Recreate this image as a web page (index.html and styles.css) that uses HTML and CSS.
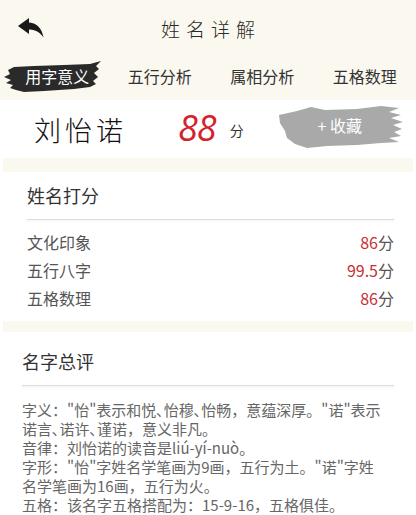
FILE: index.html
```html
<!DOCTYPE html>
<html lang="zh-CN">
<head>
    <meta charset="UTF-8">
    <meta name="viewport" content="width=device-width, initial-scale=1.0">
    <title>姓名详解</title>
    <link rel="stylesheet" href="styles.css">
</head>
<body>
    <!-- 顶部 -->
    <div class="header">
        <div class="topbar">
            <svg class="back" width="26" height="20" viewBox="0 0 26 20">
                <path d="M0 8 L11 0 L11 16 Z" fill="#1a1a1a"/>
                <path d="M9 4.5 C18 4 24 10 25.5 19.5 C21 13 16 11.5 9 11.5 Z" fill="#1a1a1a"/>
            </svg>
            <div class="title">姓名详解</div>
        </div>
        <div class="tabs">
            <div class="tab active">
                <svg class="brush" width="98" height="32" viewBox="0 0 98 32" preserveAspectRatio="none">
                    <path d="M4 9 L10 6 L30 5 L60 4 L86 3 L97 0 L92 5 L95 8 L90 12 L94 16 L89 20 L92 23 L86 26 L70 28 L40 30 L20 31 L12 29 L6 27 L9 24 L2 22 L7 19 L0 16 L6 13 Z" fill="#2a2a2a"/>
                </svg>
                <span>用字意义</span>
            </div>
            <div class="tab">五行分析</div>
            <div class="tab">属相分析</div>
            <div class="tab">五格数理</div>
        </div>
    </div>

    <!-- 名字和总分 -->
    <div class="name-row">
        <div class="name">刘怡诺</div>
        <div class="score">88</div>
        <div class="unit">分</div>
        <div class="fav">
            <svg class="brush" width="126" height="43" viewBox="0 0 126 43" preserveAspectRatio="none">
                <path d="M2 10 L20 6 L34 2 L48 5 L80 4 L104 1 L122 3 L112 7 L124 10 L114 13 L126 17 L116 20 L125 24 L117 27 L124 31 L112 33 L122 37 L104 38 L80 40 L50 41 L30 43 L18 39 L10 33 L8 26 L3 18 Z" fill="#a9a9a9"/>
            </svg>
            <span>+ 收藏</span>
        </div>
    </div>

    <div class="gap"></div>

    <!-- 姓名打分 -->
    <div class="card">
        <div class="card-title">姓名打分</div>
        <div class="line"></div>
        <div class="row"><span>文化印象</span><span class="val"><b>86</b>分</span></div>
        <div class="row"><span>五行八字</span><span class="val"><b>99.5</b>分</span></div>
        <div class="row"><span>五格数理</span><span class="val"><b>86</b>分</span></div>
    </div>

    <div class="gap gap2"></div>

    <!-- 名字总评 -->
    <div class="card card3">
        <div class="card-title">名字总评</div>
        <div class="line"></div>
        <div class="desc">
            <p>字义："怡"表示和悦､怡穆､怡畅，意蕴深厚。"诺"表示诺言､诺许､谨诺，意义非凡。</p>
            <p>音律：刘怡诺的读音是liú-yí-nuò。</p>
            <p>字形："怡"字姓名学笔画为9画，五行为土。"诺"字姓名学笔画为16画，五行为火。</p>
            <p>五格：该名字五格搭配为：15-9-16，五格俱佳。</p>
        </div>
    </div>
</body>
</html>
```

FILE: styles.css
```css
/* 基本样式 */
body {
    margin: 0;
    background-color: #fff;
    font-family: "Noto Sans CJK SC", "Noto Sans", sans-serif;
    color: #333;
    overflow: hidden;
}

.header {
    background-color: #faf8ef;
    height: 100px;
}

.topbar {
    height: 56px;
    display: flex;
    align-items: center;
    justify-content: center;
    position: relative;
}

.back {
    position: absolute;
    left: 18px;
    top: 18px;
}

.title {
    font-size: 19px;
    letter-spacing: 6px;
    margin-left: 6px;
    color: #2a2a2a;
    font-weight: 300;
}

/* 标签 */
.tabs {
    display: grid;
    grid-template-columns: repeat(4, 1fr);
    padding-left: 6px;
    height: 44px;
    align-items: center;
    margin-top: -2px;
}

.tab {
    position: relative;
    text-align: center;
    font-size: 16px;
    color: #333;
}

.tab.active {
    color: #fff;
}

.tab .brush {
    position: absolute;
    left: -2px;
    top: -3px;
}

.tab span {
    position: relative;
}

/* 名字 */
.name-row {
    height: 58px;
    display: flex;
    align-items: center;
}

.name {
    font-size: 27px;
    font-weight: 300;
    letter-spacing: 4px;
    margin-left: 34px;
    width: 144px;
    color: #111;
}

.score {
    font-family: "Open Sans", sans-serif;
    font-style: italic;
    font-size: 36px;
    color: #d3232c;
    margin-top: -4px;
    letter-spacing: -1px;
}

.unit {
    font-size: 14px;
    margin-left: 14px;
    margin-top: 2px;
}

.fav {
    position: relative;
    width: 126px;
    height: 43px;
    margin-left: 33px;
    margin-top: -6px;
    display: flex;
    align-items: center;
    justify-content: center;
    color: #fff;
    font-size: 16px;
}

.fav .brush {
    position: absolute;
    left: 0;
    top: 0;
}

.fav span {
    position: relative;
    margin-top: -2px;
}

.gap {
    height: 14px;
    background-color: #faf8ef;
    margin: 0 3px;
}

.gap2 {
    height: 11px;
}

/* 卡片 */
.card {
    padding: 12px 22px 9px 27px;
}

.card-title {
    font-size: 18px;
    line-height: 22px;
    color: #333;
}

.line {
    height: 1px;
    background-color: #ddd;
    box-shadow: 0 1px 2px rgba(0, 0, 0, 0.08);
    margin: 13px 0 8px;
}

.row {
    display: flex;
    justify-content: space-between;
    line-height: 28px;
    font-size: 16px;
    color: #555;
}

.val b {
    font-weight: normal;
    color: #c62f33;
}

.card3 {
    padding: 18px 22px 0 22px;
}

.card3 .line {
    margin: 13px 0 14px;
}

.desc {
    font-size: 15px;
    line-height: 19px;
    color: #666;
    margin-right: 10px;
}

.desc p {
    margin: 0;
}
```
